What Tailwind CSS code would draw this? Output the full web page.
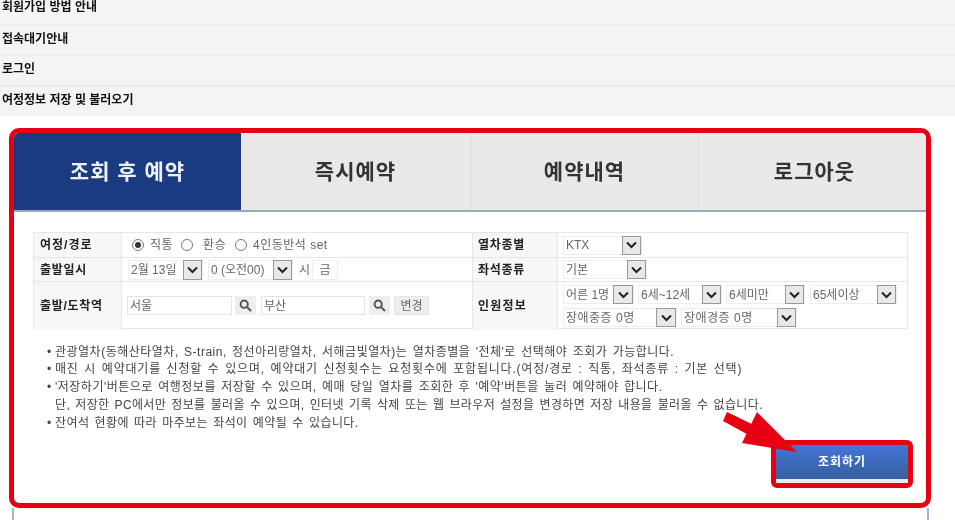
<!DOCTYPE html>
<html lang="ko"><head><meta charset="utf-8">
<script src="https://cdn.jsdelivr.net/npm/@tailwindcss/browser@4"></script></head>
<body class="bg-white">
<div class="relative w-[955px] h-[520px] overflow-hidden bg-white text-[#222] blur-[0.35px] font-['Liberation_Sans','Noto_Sans_CJK_KR',sans-serif]">
  <!-- FAQ rows -->
  <div class="h-[116px] bg-[#f4f4f4] flex flex-col text-[12px] font-bold text-[#111]">
    <div class="h-[24px] px-[2px] leading-[14px] pt-0">회원가입 방법 안내</div>
    <div class="h-[30px] px-[2px] border-t-2 border-[#ececec] flex items-center pb-[3px]">접속대기안내</div>
    <div class="h-[31px] px-[2px] border-t-2 border-[#ececec] flex items-center pb-[4px]">로그인</div>
    <div class="h-[31px] px-[2px] border-t-2 border-[#ececec] flex items-center pb-[3px]">여정정보 저장 및 불러오기</div>
  </div>
  <!-- Panel -->
  <div class="relative mt-[12px] ml-[9px] w-[922px] h-[380px] border-[5px] border-[#e60012] rounded-[10px] overflow-hidden bg-white">
    <div class="flex h-[79px] border-b-2 border-[#9aa9c2] text-[21px] font-bold text-[#333] tracking-[1px]">
      <div class="w-[227px] bg-[#1a3b80] text-[#eef2f8] flex items-center justify-center">조회 후 예약</div>
      <div class="w-[230px] bg-[#e9e9e9] border-r border-[#dcdcdc] flex items-center justify-center">즉시예약</div>
      <div class="w-[228px] bg-[#e9e9e9] border-r border-[#dcdcdc] flex items-center justify-center">예약내역</div>
      <div class="w-[227px] bg-[#e9e9e9] flex items-center justify-center pl-[4px]">로그아웃</div>
    </div>
    <!-- Form table -->
    <div class="mt-[20px] ml-[19px] w-[875px] h-[97px] grid grid-cols-[88px_350px_86px_351px] grid-rows-[25px_24px_48px] border border-[#e6e6e6] text-[12px] text-[#666]">
      <div class="bg-[#f7f7f7] border-b border-r border-[#e6e6e6] flex items-center pl-[6px] font-bold text-[#222] text-[12px] tracking-[1px]">여정/경로</div>
      <div class="border-b border-[#e6e6e6] flex items-center pl-[10px] tracking-[0.5px]">
        <span class="w-[12px] h-[12px] shrink-0 rounded-full border border-[#777] flex items-center justify-center"><span class="w-[6px] h-[6px] rounded-full bg-[#333]"></span></span>
        <span class="ml-[6px] w-[31px]">직통</span>
        <span class="w-[12px] h-[12px] shrink-0 rounded-full border border-[#777]"></span>
        <span class="ml-[10px] w-[32px]">환승</span>
        <span class="w-[12px] h-[12px] shrink-0 rounded-full border border-[#777]"></span>
        <span class="ml-[6px]">4인동반석 set</span>
      </div>
      <div class="bg-[#f7f7f7] border-b border-l border-r border-[#e6e6e6] flex items-center pl-[5px] font-bold text-[#222] text-[12px] tracking-[0.7px]">열차종별</div>
      <div class="border-b border-[#e6e6e6] flex items-center pl-[5px]">
        <div class="w-[79px] h-[19px] flex justify-between items-center border border-[#eee] pl-[2px]">KTX
          <span class="w-[19px] h-[19px] shrink-0 bg-[#e8e8e8] border border-[#999] flex items-center justify-center"><svg width="11" height="8" viewBox="0 0 11 8" fill="none" stroke="#222" stroke-width="2"><path d="M1 1.5 5.5 6 10 1.5"/></svg></span></div>
      </div>
      <div class="bg-[#f7f7f7] border-b border-r border-[#e6e6e6] flex items-center pl-[6px] font-bold text-[#222] text-[12px] tracking-[0.7px]">출발일시</div>
      <div class="border-b border-[#e6e6e6] flex items-center pl-[6px]">
        <div class="w-[75px] h-[20px] flex justify-between items-center border border-[#eee] pl-[2px] whitespace-nowrap">2월 13일
          <span class="w-[19px] h-[20px] shrink-0 bg-[#e8e8e8] border border-[#999] flex items-center justify-center"><svg width="11" height="8" viewBox="0 0 11 8" fill="none" stroke="#222" stroke-width="2"><path d="M1 1.5 5.5 6 10 1.5"/></svg></span></div>
        <div class="ml-[5px] w-[85px] h-[20px] flex justify-between items-center border border-[#eee] pl-[2px] whitespace-nowrap">0 (오전00)
          <span class="w-[19px] h-[20px] shrink-0 bg-[#e8e8e8] border border-[#999] flex items-center justify-center"><svg width="11" height="8" viewBox="0 0 11 8" fill="none" stroke="#222" stroke-width="2"><path d="M1 1.5 5.5 6 10 1.5"/></svg></span></div>
        <span class="ml-[6px]">시</span>
        <span class="ml-[2px] w-[26px] h-[20px] border border-[#eee] flex items-center justify-center">금</span>
      </div>
      <div class="bg-[#f7f7f7] border-b border-l border-r border-[#e6e6e6] flex items-center pl-[5px] font-bold text-[#222] text-[12px] tracking-[0.7px]">좌석종류</div>
      <div class="border-b border-[#e6e6e6] flex items-center pl-[5px]">
        <div class="w-[84px] h-[19px] flex justify-between items-center border border-[#eee] pl-[2px]">기본
          <span class="w-[19px] h-[19px] shrink-0 bg-[#e8e8e8] border border-[#999] flex items-center justify-center"><svg width="11" height="8" viewBox="0 0 11 8" fill="none" stroke="#222" stroke-width="2"><path d="M1 1.5 5.5 6 10 1.5"/></svg></span></div>
      </div>
      <div class="bg-[#f7f7f7] border-r border-[#e6e6e6] flex items-center pl-[6px] font-bold text-[#222] text-[12px] tracking-[0.7px]">출발/도착역</div>
      <div class="flex items-center pl-[5px] pb-[1px]">
        <div class="w-[105px] h-[19px] border border-[#e4e4e4] flex items-center pl-[2px]">서울</div>
        <span class="ml-[3px] w-[21px] h-[19px] bg-[#eeeeee] flex items-center justify-center"><svg width="13" height="13" viewBox="0 0 13 13" fill="none" stroke="#555" stroke-width="2"><circle cx="5.2" cy="5.2" r="3.6"/><path d="M8 8l4 4"/></svg></span>
        <div class="ml-[5px] w-[104px] h-[19px] border border-[#e4e4e4] flex items-center pl-[2px]">부산</div>
        <span class="ml-[4px] w-[21px] h-[19px] bg-[#eeeeee] flex items-center justify-center"><svg width="13" height="13" viewBox="0 0 13 13" fill="none" stroke="#555" stroke-width="2"><circle cx="5.2" cy="5.2" r="3.6"/><path d="M8 8l4 4"/></svg></span>
        <span class="ml-[4px] w-[35px] h-[19px] bg-[#eeeeee] border border-[#e4e4e4] flex items-center justify-center">변경</span>
      </div>
      <div class="bg-[#f7f7f7] border-l border-r border-[#e6e6e6] flex items-center pl-[5px] font-bold text-[#222] text-[12px] tracking-[1.2px]">인원정보</div>
      <div class="pl-[5px] pt-[3px] flex flex-col gap-[4px] whitespace-nowrap">
        <div class="flex gap-[4px]">
          <div class="w-[71px] h-[19px] flex justify-between items-center border border-[#eee] pl-[2px]">어른 1명
            <span class="w-[20px] h-[19px] shrink-0 bg-[#e8e8e8] border border-[#999] flex items-center justify-center"><svg width="11" height="8" viewBox="0 0 11 8" fill="none" stroke="#222" stroke-width="2"><path d="M1 1.5 5.5 6 10 1.5"/></svg></span></div>
          <div class="w-[84px] h-[19px] flex justify-between items-center border border-[#eee] pl-[2px]">6세~12세
            <span class="w-[19px] h-[19px] shrink-0 bg-[#e8e8e8] border border-[#999] flex items-center justify-center"><svg width="11" height="8" viewBox="0 0 11 8" fill="none" stroke="#222" stroke-width="2"><path d="M1 1.5 5.5 6 10 1.5"/></svg></span></div>
          <div class="w-[79px] h-[19px] flex justify-between items-center border border-[#eee] pl-[2px]">6세미만
            <span class="w-[19px] h-[19px] shrink-0 bg-[#e8e8e8] border border-[#999] flex items-center justify-center"><svg width="11" height="8" viewBox="0 0 11 8" fill="none" stroke="#222" stroke-width="2"><path d="M1 1.5 5.5 6 10 1.5"/></svg></span></div>
          <div class="ml-[1px] w-[87px] h-[19px] flex justify-between items-center border border-[#eee] pl-[2px]">65세이상
            <span class="w-[19px] h-[19px] shrink-0 bg-[#e8e8e8] border border-[#999] flex items-center justify-center"><svg width="11" height="8" viewBox="0 0 11 8" fill="none" stroke="#222" stroke-width="2"><path d="M1 1.5 5.5 6 10 1.5"/></svg></span></div>
        </div>
        <div class="flex gap-[4px]">
          <div class="w-[114px] h-[19px] flex justify-between items-center border border-[#eee] pl-[2px] tracking-[0.5px]">장애중증 0명
            <span class="w-[20px] h-[19px] shrink-0 bg-[#e8e8e8] border border-[#999] flex items-center justify-center"><svg width="11" height="8" viewBox="0 0 11 8" fill="none" stroke="#222" stroke-width="2"><path d="M1 1.5 5.5 6 10 1.5"/></svg></span></div>
          <div class="w-[116px] h-[19px] flex justify-between items-center border border-[#eee] pl-[2px] tracking-[0.5px]">장애경증 0명
            <span class="w-[19px] h-[19px] shrink-0 bg-[#e8e8e8] border border-[#999] flex items-center justify-center"><svg width="11" height="8" viewBox="0 0 11 8" fill="none" stroke="#222" stroke-width="2"><path d="M1 1.5 5.5 6 10 1.5"/></svg></span></div>
        </div>
      </div>
    </div>
    <!-- Notes -->
    <div class="mt-[14px] ml-[33px] text-[12px] leading-[18px] [word-spacing:1.5px] text-[#444] whitespace-nowrap">
      <div class="h-[17px] flex tracking-[0.5px]"><span class="w-[8px]">•</span><span>관광열차(동해산타열차, S-train, 정선아리랑열차, 서해금빛열차)는 열차종별을 '전체'로 선택해야 조회가 가능합니다.</span></div>
      <div class="h-[18px] flex tracking-[0.8px]"><span class="w-[8px]">•</span><span>매진 시 예약대기를 신청할 수 있으며, 예약대기 신청횟수는 요청횟수에 포함됩니다.(여정/경로 : 직통, 좌석종류 : 기본 선택)</span></div>
      <div class="h-[18px] flex tracking-[0.5px]"><span class="w-[8px]">•</span><span>'저장하기'버튼으로 여행정보를 저장할 수 있으며, 예매 당일 열차를 조회한 후 '예약'버튼을 눌러 예약해야 합니다.</span></div>
      <div class="h-[18px] pl-[8px] tracking-[0.35px]">단, 저장한 PC에서만 정보를 불러올 수 있으며, 인터넷 기록 삭제 또는 웹 브라우저 설정을 변경하면 저장 내용을 불러올 수 없습니다.</div>
      <div class="h-[18px] flex tracking-[0.4px]"><span class="w-[8px]">•</span><span>잔여석 현황에 따라 마주보는 좌석이 예약될 수 있습니다.</span></div>
    </div>
    <!-- Search button -->
    <div class="absolute left-[757px] top-[307px] w-[142px] h-[48px] border-[5px] border-[#e60012] rounded-[6px] bg-[#e8ebf5]">
      <div class="h-[34px] bg-gradient-to-b from-[#4474d8] to-[#36609f] flex items-center justify-center text-white font-bold text-[12px] tracking-[1px]">조회하기</div>
    </div>
  </div>
  <!-- panel continuation -->
  <div class="ml-[12px] w-[917px] h-[12px] border-x-2 border-[#aab4c9]"></div>
  <!-- annotation arrow -->
  <svg class="absolute left-0 top-0 pointer-events-none" width="955" height="520" viewBox="0 0 955 520" fill="#e60012"><path d="M757 412 742 443 797 452Z"/><path d="M727 412 723 421 754 438 760 428Z"/></svg>
</div>
</body></html>
